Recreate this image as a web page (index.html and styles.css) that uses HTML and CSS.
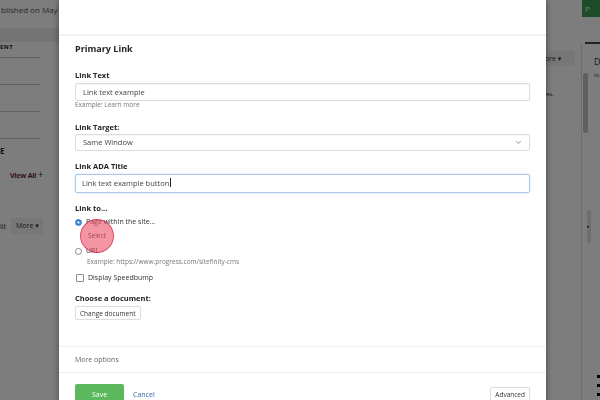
FILE: index.html
```html
<!DOCTYPE html>
<html lang="en">
<head>
    <meta charset="UTF-8" />
    <meta name="viewport" content="width=device-width, initial-scale=1.0"/>
    <title>Edit Primary Link</title>
    <link rel="stylesheet" href="styles.css">
</head>
<body>
    <div class="page">
        <div class="page-left">
            <p class="published">blished on May 2</p>
            <div class="band"></div>
            <p class="group-title">ENT</p>
            <div class="rules">
                <div class="rule"></div>
                <div class="rule"></div>
                <div class="rule"></div>
                <div class="rule"></div>
            </div>
            <p class="group-letter">E</p>
            <a class="view-all">View All <span>+</span></a>
            <div class="actions"><span>lit</span><span class="more-btn">More &#9662;</span></div>
        </div>
        <div class="page-mid"></div>
        <div class="page-right">
            <div class="publish-row"><span class="publish-btn">P</span></div>
            <div class="tabs-line"></div>
            <div class="right-body">
                <div class="right-main">
                    <span class="more-btn">ore &#9662;</span>
                    <p class="snippet">es,</p>
                </div>
                <div class="scroll-col">
                    <div class="thumb"></div>
                    <div class="side-tab">&#9656;</div>
                </div>
                <div class="info-col">
                    <p class="info-title">D</p>
                    <p class="info-text">lo</p>
                    <div class="dots"><i></i><i></i><i></i></div>
                </div>
            </div>
        </div>
    </div>

    <div class="overlay"></div>

    <div class="dialog">
        <div class="dialog-top"></div>
        <div class="dialog-body">
            <h2 class="dialog-title">Primary Link</h2>

            <div class="form-group">
                <label class="field-label">Link Text</label>
                <div class="field">Link text example</div>
                <p class="help">Example: Learn more</p>
            </div>

            <div class="form-group">
                <label class="field-label">Link Target:</label>
                <div class="field select">
                    <span>Same Window</span>
                    <svg width="7" height="7" viewBox="0 0 8 8"><path d="M1.5 2.5 L4 5 L6.5 2.5" fill="none" stroke="#777" stroke-width="1"/></svg>
                </div>
            </div>

            <div class="form-group">
                <label class="field-label">Link ADA Title</label>
                <div class="field focused">Link text example button<span class="caret"></span></div>
            </div>

            <div class="form-group">
                <label class="field-label">Link to...</label>
                <div class="option"><span class="radio checked"></span>Page within the site...</div>
                <div class="select-row">
                    <button class="select-btn">Select</button>
                    <span class="click-mark"></span>
                </div>
                <div class="option second"><span class="radio"></span>URL</div>
                <p class="help indent">Example: https://www.progress.com/sitefinity-cms</p>
                <div class="option check"><span class="checkbox"></span>Display Speedbump</div>
            </div>

            <div class="form-group">
                <label class="field-label">Choose a document:</label>
                <button class="small-btn">Change document</button>
            </div>
        </div>

        <div class="dialog-more">More options</div>

        <div class="dialog-footer">
            <button class="btn-save">Save</button>
            <a class="btn-cancel">Cancel</a>
            <button class="small-btn advanced">Advanced</button>
        </div>
    </div>
</body>
</html>
```

FILE: styles.css
```css
body {
    font-family: 'Open Sans', 'DejaVu Sans', sans-serif;
    margin: 0; padding: 0;
    width: 600px; height: 400px;
    overflow: hidden;
    background: #fff; color: #333;
}
p { margin: 0; }

/* page behind the dialog */
.page {
    display: flex;
    height: 400px;
}
.page-left {
    width: 59px;
    white-space: nowrap;
}
.page-mid { flex: 1; }
.page-right {
    width: 60px;
    white-space: nowrap;
    overflow: hidden;
}

.published {
    font-size: 8px; line-height: 20px; color: #555; padding-left: 1px;
}
.band {
    margin-top: 8px; height: 14px; background: #ececec;
}
.group-title {
    font-size: 6px; font-weight: 700; line-height: 8px; margin-top: 1px;
    letter-spacing: 0.5px; color: #222;
}
.rules { padding-top: 6px; }
.rule { width: 40px; height: 1px; background: #c8c8c8; }
.rule + .rule { margin-top: 26px; }
.group-letter {
    font-size: 8px; font-weight: 700; line-height: 10px; margin-top: 7px; color: #222;
}
.view-all {
    display: block;
    margin-top: 13px; padding-left: 10px;
    font-size: 7px; font-weight: 700; line-height: 10px; letter-spacing: -0.2px;
    color: #6a1f3a;
}
.view-all span { font-size: 10px; font-weight: 400; color: #333; }
.actions {
    display: flex; align-items: center;
    margin-top: 37px; height: 16px;
    font-size: 7px; color: #333;
}
.more-btn {
    display: inline-block;
    background: #f3f3f3;
    padding: 0 5px;
    line-height: 16px;
    font-size: 7px; color: #333;
}
.actions .more-btn { margin-left: 5px; width: 22px; }

.publish-row {
    display: flex; justify-content: flex-end; height: 17px;
}
.publish-btn {
    width: 18px; background: #3e9a52; color: #dfe;
    font-size: 8px; line-height: 17px; padding-left: 3px; box-sizing: border-box;
}
.tabs-line {
    margin: 25px 0 0 45px; height: 2px; background: #444;
}
.right-body {
    display: flex; height: 356px;
}
.right-main { width: 41px; }
.right-main .more-btn { margin-top: 1px; line-height: 15px; width: 25px; }
.snippet {
    margin-top: 24px; padding-left: 6px;
    font-size: 6px; line-height: 8px; color: #333;
}
.scroll-col {
    width: 9px; border-left: 1px solid #ddd; box-sizing: border-box;
}
.thumb {
    margin: 29px 0 0 1px; width: 5px; height: 60px; background: #c4c4c4; border-radius: 2px;
}
.side-tab {
    margin: 77px 0 0 5px; width: 4px; height: 33px; background: #e2e2e2;
    font-size: 5px; line-height: 33px; color: #222; overflow: hidden;
}
.info-col {
    width: 10px;
    display: flex; flex-direction: column;
    padding-bottom: 4px; box-sizing: border-box;
}
.info-title { margin-top: 12px; padding-left: 4px; font-size: 9px; line-height: 12px; color: #333; }
.info-text { margin-top: 3px; padding-left: 4px; font-size: 6px; line-height: 8px; color: #444; }
.dots {
    margin-top: auto; margin-left: 7px;
    display: flex; flex-direction: column; gap: 6px;
}
.dots i { display: block; width: 3px; height: 3px; background: #000; }

.overlay {
    position: fixed; top: 0; left: 0; right: 0; bottom: 0;
    background: rgba(0,0,0,0.51);
}

/* dialog */
.dialog {
    position: absolute; top: 0; left: 59px;
    width: 487px; height: 420px;
    background: #fff;
    box-shadow: 0 0 6px rgba(0,0,0,0.45);
}
.dialog-top {
    height: 34px; border-bottom: 2px solid #f1f1f1;
}
.dialog-body {
    padding: 6px 16px 26px;
}
.dialog-title {
    margin: 0;
    font-size: 9px; font-weight: 700; line-height: 14px; color: #222;
}
.form-group { margin-top: 10px; }
.dialog-title + .form-group { margin-top: 14px; }

.field-label {
    display: block;
    font-size: 7.5px; font-weight: 700; line-height: 10px; color: #222;
    margin-bottom: 3px;
}
.field {
    height: 18px; box-sizing: border-box;
    border: 1px solid #dcdcdc; border-radius: 2px;
    box-shadow: inset 0 1px 1px rgba(0,0,0,0.04);
    padding: 0 7px;
    font-size: 7.5px; line-height: 16px; color: #444;
}
.field.select {
    height: 17px; line-height: 15px;
    display: flex; justify-content: space-between; align-items: center;
    margin-top: -1px;
}
.field.focused {
    height: 19px; line-height: 17px;
    border-color: #a9c9e6;
    box-shadow: 0 0 2px rgba(90,150,210,0.35);
    padding-left: 6px;
}
.caret {
    display: inline-block; width: 1px; height: 9px; background: #222;
    vertical-align: -1px; margin-left: 1px;
}
.help {
    font-size: 6.5px; line-height: 8px; color: #777;
    padding-bottom: 3px;
}
.help.indent { margin-top: 2px; padding-left: 12px; padding-bottom: 0; }

.option {
    display: flex; align-items: center; gap: 4px;
    margin-top: 4px;
    font-size: 7px; line-height: 10px; color: #333;
}
.option.second { margin-top: 5px; }
.option.check { margin-top: 7px; }
.radio {
    width: 7px; height: 7px; box-sizing: border-box;
    border: 1px solid #8a8a8a; border-radius: 50%; background: #fff;
}
.radio.checked {
    border: 1px solid #2f76c6;
    background: radial-gradient(circle, #fff 0 0.8px, #3a8ae0 1.3px);
}
.checkbox {
    width: 6px; height: 6px;
    border: 1px solid #8a8a8a; border-radius: 1px;
    margin-left: 0.5px; margin-right: 0.5px;
}

.select-row {
    position: relative;
    margin-top: 4px; height: 10px;
    font-size: 6.5px; line-height: 10px;
}
.select-btn {
    display: block;
    border: 0; background: none; padding: 0 0 0 13px; margin: 0;
    height: 10px;
    font-family: inherit; font-size: 6.5px; line-height: 10px; color: #444;
}
.click-mark {
    position: absolute; left: 5px; top: -12px;
    width: 34px; height: 34px; box-sizing: border-box;
    border-radius: 50%;
    background: rgba(236,72,98,0.58);
    border: 1.5px solid rgba(206,36,66,0.65);
}

.small-btn {
    display: block;
    height: 14px; padding: 0 4px;
    background: #fff; border: 1px solid #dcdcdc; border-radius: 2px;
    font-family: inherit; font-size: 6.5px; color: #333;
}

.dialog-more {
    border-top: 1px solid #efefef; border-bottom: 1px solid #efefef;
    height: 25px; line-height: 25px;
    padding-left: 16px;
    font-size: 7px; color: #666;
}

.dialog-footer {
    display: flex; align-items: center;
    padding: 11px 16px;
}
.btn-save {
    width: 49px; height: 20px;
    border: 0; border-radius: 2px;
    background: #5cb85c; color: #fff;
    font-family: inherit; font-size: 7px;
}
.btn-cancel {
    margin-left: 9px;
    font-size: 7px; color: #3567a6;
}
.small-btn.advanced { margin-left: auto; height: 14px; }
```
